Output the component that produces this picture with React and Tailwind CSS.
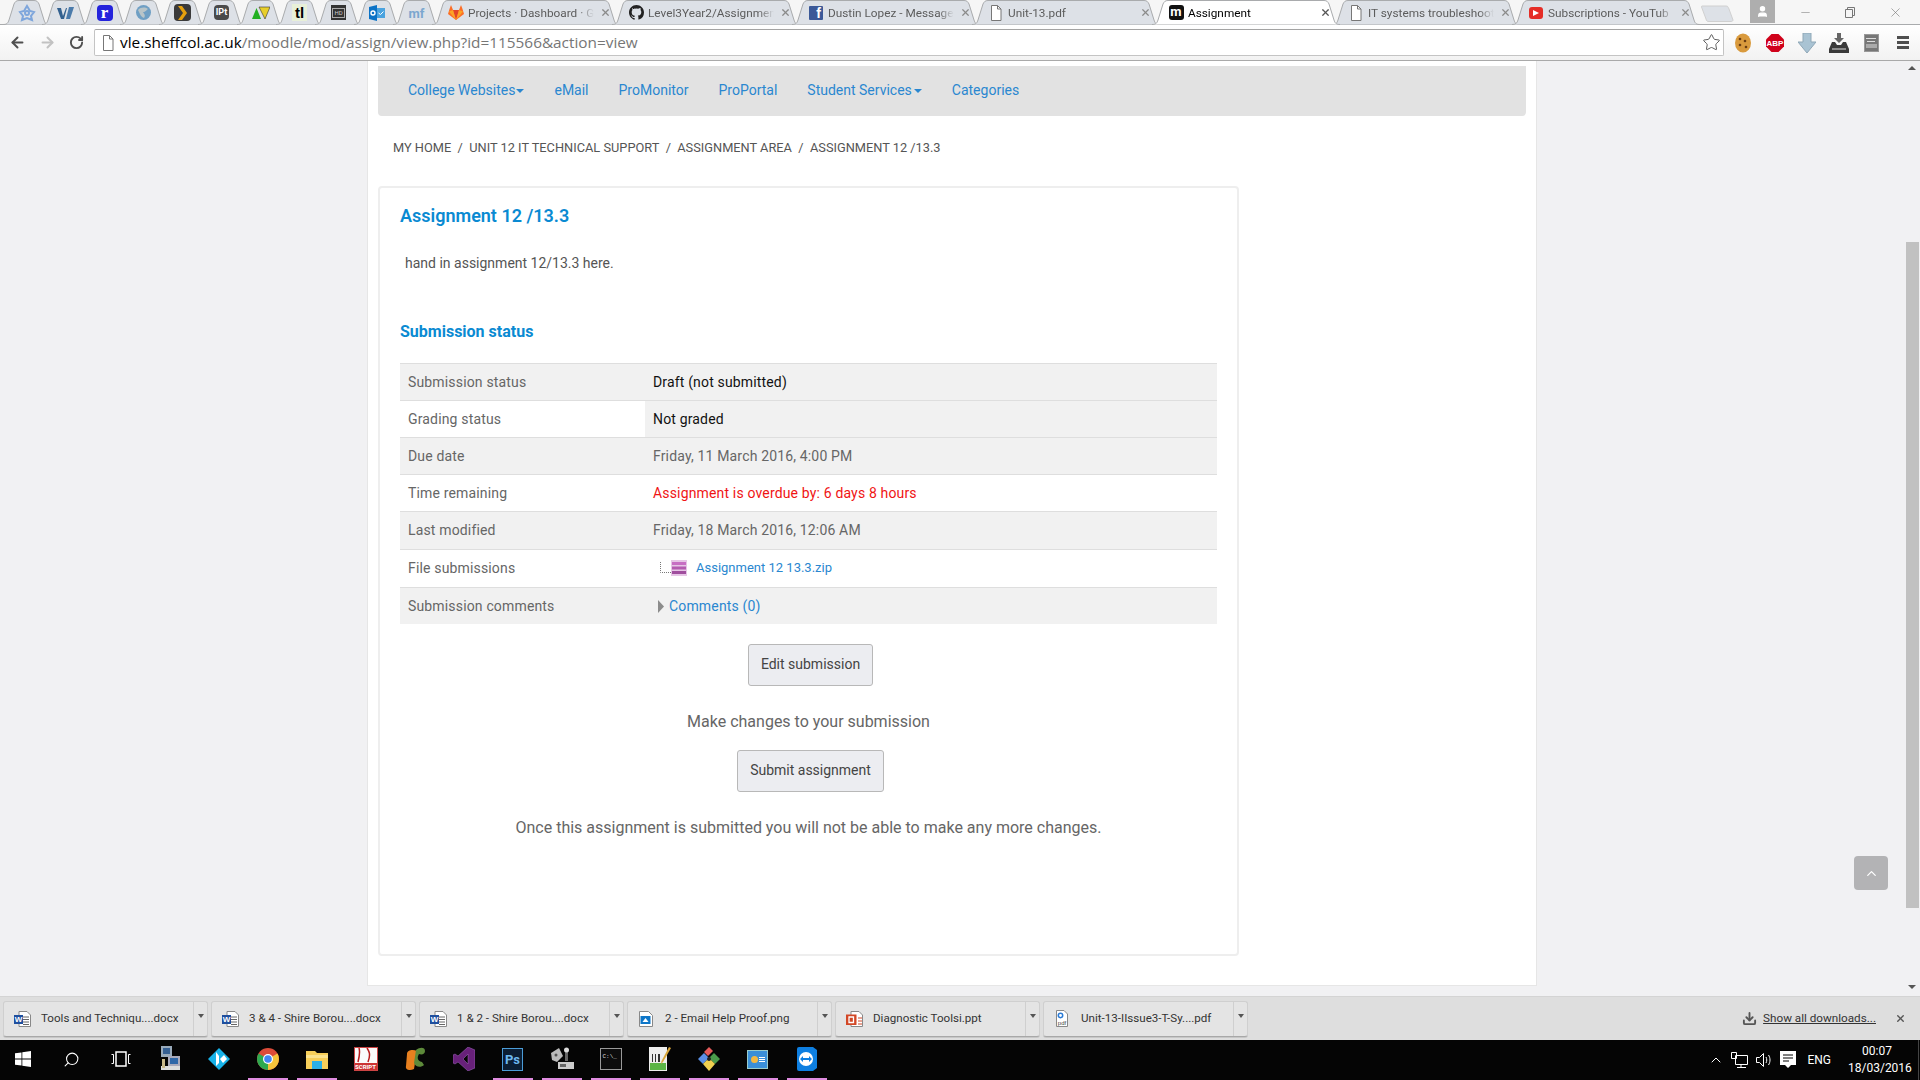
import { Star, ArrowLeft, ArrowRight, RotateCw, X, Minus, Download, Search, ChevronUp, User } from 'lucide-react';

const chromeFont = { fontFamily: 'Roboto, "Noto Sans", sans-serif' };

const PageIcon = () => (
  <svg width="14" height="16" viewBox="0 0 14 16" fill="#fff" stroke="#777">
    <path d="M2.5.5h6l3.500 3.500v11.500h-9.500z" />
    <path d="M8.500.5v3.500h3.500" fill="none" />
  </svg>
);

const pinned = [
  <svg key="a" width="18" height="18" viewBox="0 0 18 18" fill="none" stroke="#7ea6dc" strokeWidth="2"><path d="M9 2l3 5 4 1-3 4 1 4-5-2-5 2 1-4-3-4 4-1z" /><circle cx="9" cy="9" r="2" /></svg>,
  <svg key="b" width="18" height="14" viewBox="0 0 18 14" fill="#33618f"><path d="M0 2h4l2 8 3-8h1l-3 11H4z" /><path d="M12 1h5l-4 12H9z" fill="#4b7bab" /></svg>,
  <div key="c" className="w-4 h-4 bg-[#2323dc] rounded-sm flex items-center justify-center text-white font-bold text-[17px] leading-none font-['Liberation_Serif',serif]">r</div>,
  <svg key="d" width="17" height="17" viewBox="0 0 17 17"><circle cx="8.500" cy="8.500" r="7.500" fill="#6f9fc4" /><path d="M3 6c3-3 7-3 10-1-2 1-2 3-5 3 1 2 3 3 1 6-3-1-4-4-6-8z" fill="#b8c4c8" /></svg>,
  <div key="e" className="w-[17px] h-[17px] bg-[#3a3a3a] rounded-sm flex items-center justify-center"><svg width="9" height="14" viewBox="0 0 9 14" fill="#e5a00d"><path d="M0 0h4l5 7-5 7H0l5-7z" /></svg></div>,
  <div key="f" className="w-[15px] h-[15px] bg-[#4a4a4a] rounded-sm flex items-center justify-center text-white font-bold text-[9px] leading-none">IPt</div>,
  <svg key="g" width="18" height="14" viewBox="0 0 18 14"><path d="M4.500 2L9 13H0z" fill="#22b022" /><path d="M7 1h11l-5 12z" fill="#e8cf2a" stroke="#333" strokeWidth=".6" /></svg>,
  <div key="h" className="w-[15px] h-[17px] bg-[#e8f0d8] flex items-center justify-center text-black font-bold text-[15px] leading-none font-['Liberation_Sans',sans-serif]">tl</div>,
  <div key="i" className="w-[15px] h-[15px] bg-[#333] flex items-center justify-center"><span className="border border-[#aaa] text-[#ccc] text-[6px] leading-none px-[1px] py-[1px]">HD</span></div>,
  <svg key="j" width="17" height="16" viewBox="0 0 17 16"><path d="M7 3h9v10H7z" fill="#4aa3df" /><path d="M9.500 8l2 1.500 3-3" stroke="#fff" fill="none" /><path d="M0 2l8-2v16l-8-2z" fill="#0a72c6" /><circle cx="4" cy="8" r="2" fill="none" stroke="#fff" strokeWidth="1.400" /></svg>,
  <span key="k" className="text-[#7ba7cf] font-bold text-[13px] leading-none">mf</span>,
];

const TabShape = ({ fill, stroke, w }) => (
  <svg className="absolute left-0 top-0" width={w} height="25" viewBox={`0 0 ${w} 25`}>
    <path d={`M0 24.500C4 24.500 5 23 6 20L11 4C12 2 13 .5 16 .5H${w - 16}C${w - 13} .5 ${w - 12} 2 ${w - 11} 4L${w - 6} 20C${w - 5} 23 ${w - 4} 24.500 ${w} 24.500`} fill={fill} stroke={stroke} />
  </svg>
);

const PinnedTab = ({ children }) => (
  <div className="relative w-[47px] h-[25px] -mr-[8px] shrink-0 flex items-center justify-center">
    <TabShape w={47} fill="#dde1e7" stroke="#a9abad" />
    <div className="relative">{children}</div>
  </div>
);

const Tab = ({ icon, title, active }) => (
  <div className={`relative w-[188px] h-[25px] -mr-[8px] shrink-0 ${active ? 'z-10' : ''}`}>
    <TabShape w={188} fill={active ? '#ffffff' : '#dde1e7'} stroke="#a9abad" />
    <div className="relative flex items-center h-full pl-[16px]">
      <div className="w-4 h-4 shrink-0 flex items-center justify-center">{icon}</div>
      <span className={`ml-[4px] w-[126px] whitespace-nowrap text-[11.800px] leading-[24px] [mask-image:linear-gradient(to_right,black_88%,transparent)] ${active ? 'text-black' : 'text-[#5c5c5c]'}`}>{title}</span>
      <X size={11} strokeWidth={2.6} className={`ml-[6px] shrink-0 ${active ? 'text-[#555]' : 'text-[#8a8a8a]'}`} />
    </div>
  </div>
);

const TabBar = () => (
  <div className="h-[25px] bg-[#f6f6f6] relative flex items-start pl-[3px] shrink-0 border-b border-[#a9abad]" style={chromeFont}>
    {pinned.map((p, i) => <PinnedTab key={i}>{p}</PinnedTab>)}
    <Tab title="Projects · Dashboard · G" icon={
      <svg width="16" height="15" viewBox="0 0 16 15"><path d="M8 15L0 9l1.500-5L3 0l2 5h6l2-5 1.500 4L16 9z" fill="#fc6d26" /><path d="M8 15L5 5h6z" fill="#e24329" /><path d="M8 15L1 6.500 5 5zM8 15l7-8.500L11 5z" fill="#fca326" /></svg>
    } />
    <Tab title="Level3Year2/Assignmen" icon={
      <svg width="15" height="15" viewBox="0 0 16 16" fill="#222"><path d="M8 0C3.600 0 0 3.600 0 8c0 3.500 2.300 6.500 5.500 7.600.4.100.5-.2.500-.4v-1.400c-2.200.5-2.700-1-2.700-1-.4-.9-.9-1.200-.9-1.200-.7-.5.100-.5.100-.5.800.100 1.200.8 1.200.8.700 1.200 1.900.9 2.300.7.100-.5.300-.9.500-1.100-1.800-.2-3.600-.9-3.600-4 0-.9.300-1.600.8-2.100-.1-.2-.4-1 .1-2.100 0 0 .7-.2 2.200.8a7.500 7.500 0 014 0c1.500-1 2.200-.8 2.200-.8.400 1.100.2 1.900.1 2.100.5.600.8 1.300.8 2.100 0 3.100-1.900 3.700-3.700 3.900.3.300.6.800.6 1.500v2.200c0 .2.100.5.600.4A8 8 0 0016 8c0-4.400-3.600-8-8-8z" /></svg>
    } />
    <Tab title="Dustin Lopez - Message" icon={
      <div className="w-[14px] h-[14px] bg-[#3b5998] rounded-[1px] flex items-end justify-end overflow-hidden"><span className="text-white font-bold text-[14px] leading-[13px] pr-[2px] font-['Liberation_Sans',sans-serif]">f</span></div>
    } />
    <Tab title="Unit-13.pdf" icon={<PageIcon />} />
    <Tab active title="Assignment" icon={
      <div className="w-[15px] h-[15px] bg-[#111] rounded-[3px] flex items-center justify-center text-white font-bold text-[13px] leading-none pb-[2px]">m</div>
    } />
    <Tab title="IT systems troubleshoot" icon={<PageIcon />} />
    <Tab title="Subscriptions - YouTub" icon={
      <div className="w-[14px] h-[12px] bg-[#e52d27] rounded-[3px] flex items-center justify-center"><svg width="6" height="6" viewBox="0 0 6 6" fill="#fff"><path d="M0 0l6 3-6 3z" /></svg></div>
    } />
    <svg className="ml-[9px] mt-[5px] shrink-0" width="33" height="17" viewBox="0 0 33 17"><path d="M1 1H25C27 1 27 2 28 4L32 15C32 16 31 16.500 30 16.500H8C6 16.500 5.500 16 5 14L0.500 2C0.400 1.500 .5 1 1 1z" fill="#dde1e7" stroke="#d0d0d0" /></svg>
    <div className="ml-[16px] w-[25px] h-[23px] bg-[#aeaeae] flex items-center justify-center shrink-0">
      <User size={13} fill="#fff" stroke="#fff" />
    </div>
    <div className="ml-[20px] w-[20px] flex justify-center pt-[6px] text-[#777]"><Minus size={13} strokeWidth={1} /></div>
    <div className="ml-[25px] w-[20px] flex justify-center pt-[7px]">
      <svg width="10" height="11" viewBox="0 0 10 11" fill="none" stroke="#777"><path d="M.5 2.500h7v8h-7zM2.500 2.500v-2h7v8h-2" /></svg>
    </div>
    <div className="ml-[25px] w-[20px] flex justify-center pt-[5px] text-[#777]"><X size={15} strokeWidth={1} /></div>
  </div>
);

const ToolSlot = ({ children }) => <div className="w-[32px] flex justify-center items-center">{children}</div>;

const Toolbar = () => (
  <div className="h-[36px] bg-gradient-to-b from-white to-[#f2f2f2] border-b border-[#a9a9a9] shrink-0 flex items-center relative z-20">
    <ArrowLeft size={17} strokeWidth={2.8} className="ml-[9px] text-[#4f4f4f]" />
    <ArrowRight size={17} strokeWidth={2.8} className="ml-[13px] text-[#c2c2c2]" />
    <RotateCw size={15} strokeWidth={3} className="ml-[13px] text-[#4f4f4f]" />
    <div className="ml-[10px] h-[27px] w-[1630px] bg-white border border-[#c4c4c4] border-t-[#a3a3a3] rounded-[2px] flex items-center pl-[6px] relative">
      <PageIcon />
      <span className="ml-[5px] text-[15.350px] leading-none whitespace-nowrap text-[#767676] font-['Open_Sans',sans-serif]"><span className="text-black">vle.sheffcol.ac.uk</span>/moodle/mod/assign/view.php?id=115566&amp;action=view</span>
      <Star size={19} strokeWidth={1.2} className="absolute right-[2px] top-[3px] text-[#555]" />
    </div>
    <div className="flex items-center ml-[3px]">
      <ToolSlot><svg width="18" height="20" viewBox="0 0 18 20"><ellipse cx="9" cy="10" rx="8" ry="9.500" fill="#d99a3d" /><circle cx="6" cy="6" r="1.300" fill="#6b3d12" /><circle cx="11" cy="8" r="1.300" fill="#6b3d12" /><circle cx="6" cy="12" r="1.300" fill="#6b3d12" /><circle cx="12" cy="14" r="1.300" fill="#6b3d12" /></svg></ToolSlot>
      <ToolSlot><svg width="18" height="18" viewBox="0 0 18 18"><path d="M5.500 0h7L18 5.500v7L12.500 18h-7L0 12.500v-7z" fill="#d0021b" /><text x="9" y="12" textAnchor="middle" fill="#fff" fontSize="8" fontWeight="700" fontFamily="Liberation Sans">ABP</text></svg></ToolSlot>
      <ToolSlot><svg width="18" height="20" viewBox="0 0 18 20"><path d="M5 0h8v9h5l-9 11L0 9h5z" fill="#a9c3d3" stroke="#8fa8b7" /></svg></ToolSlot>
      <ToolSlot><svg width="20" height="20" viewBox="0 0 20 20"><path d="M8 0h4v5h3l-5 5-5-5h3z" fill="#666" /><path d="M3 9h3l2 3h4l2-3h3l3 7v4H0v-4z" fill="#3a3a3a" /><path d="M3 16h14" stroke="#ddd" /></svg></ToolSlot>
      <ToolSlot><div className="w-[15px] h-[18px] bg-[#777] border border-[#999] flex flex-col items-center justify-start pt-[3px] gap-[2px]">
        <div className="w-[10px] h-[1px] bg-[#ddd]" /><div className="w-[8px] h-[1px] bg-[#ddd]" /><div className="w-[11px] h-[4px] bg-[#aaa]" />
      </div></ToolSlot>
      <ToolSlot><div className="flex flex-col gap-[2px]">
        <div className="w-[12px] h-[3px] bg-[#4f4f4f]" /><div className="w-[12px] h-[3px] bg-[#4f4f4f]" /><div className="w-[12px] h-[3px] bg-[#4f4f4f]" />
      </div></ToolSlot>
    </div>
  </div>
);

const Row = ({ label, className, labelBg = '', valueBg = '', children }) => (
  <div className={`flex border-t border-[#dedede] text-[14px] tracking-[0.16px] text-[#666] ${className}`}>
    <div className={`w-[245px] pl-[8px] flex items-center ${labelBg}`}>{label}</div>
    <div className={`flex-1 pl-[8px] flex items-center ${valueBg}`}>{children}</div>
  </div>
);

const StatusTable = () => (
  <div className="mt-[21px]">
    <Row label="Submission status" className="h-[37px] bg-[#f1f1f1]"><span className="text-[#111]">Draft (not submitted)</span></Row>
    <Row label="Grading status" className="h-[37px]" valueBg="bg-[#f1f1f1]"><span className="text-[#111]">Not graded</span></Row>
    <Row label="Due date" className="h-[37px] bg-[#f1f1f1]">Friday, 11 March 2016, 4:00 PM</Row>
    <Row label="Time remaining" className="h-[37px]"><span className="text-[#f01414]">Assignment is overdue by: 6 days 8 hours</span></Row>
    <Row label="Last modified" className="h-[38px] bg-[#f1f1f1]">Friday, 18 March 2016, 12:06 AM</Row>
    <Row label="File submissions" className="h-[38px] pb-[1px]">
      <svg className="ml-[7px]" width="12" height="12" viewBox="0 0 12 12" fill="none" stroke="#777" strokeDasharray="1 1"><path d="M.5 0v10.500H12" /></svg>
      <svg className="-ml-[1px]" width="16" height="16" viewBox="0 0 16 16"><path d="M0 0h16v16H0z" fill="#e6c6e6" /><path d="M1 2h14v3H1z" fill="#c76fc3" /><path d="M1 6.500h14v3H1z" fill="#b45cb0" /><path d="M1 11h14v3H1z" fill="#a04e9e" /></svg>
      <span className="ml-[9px] text-[13px] tracking-normal text-[#2a87d0]">Assignment 12 13.3.zip</span>
    </Row>
    <Row label="Submission comments" className="h-[37px] bg-[#f1f1f1]">
      <svg className="ml-[5px]" width="6" height="13" viewBox="0 0 6 13" fill="#8c8c8c"><path d="M0 0l6 6.500-6 6.500z" /></svg>
      <span className="ml-[5px] text-[#2a87d0]">Comments (0)</span>
    </Row>
  </div>
);

const Button = ({ children, className }) => (
  <div className={`flex items-center justify-center pb-[1px] bg-[#ecedf1] border border-[#b8b8b8] rounded-[3px] text-[14px] text-[#444] ${className}`}>{children}</div>
);

const Caret = ({ className }) => (
  <span className={`w-0 h-0 border-x-[4px] border-x-transparent border-t-[4px] border-t-[#2a87d0] ${className}`} />
);

const Page = () => (
  <div className="ml-[367px] w-[1170px] h-[925px] bg-white border-x border-b border-[#e6e6e6] pl-[10px] pt-[5px]">
    <div className="w-[1148px] h-[50px] pb-[1px] bg-[#e2e2e2] rounded-b-[4px] flex items-center pl-[30px] gap-[30px] text-[14px] text-[#2a87d0]">
      <span className="flex items-center">College Websites<Caret className="ml-[1px]" /></span>
      <span>eMail</span>
      <span>ProMonitor</span>
      <span>ProPortal</span>
      <span className="flex items-center">Student Services<Caret className="ml-[2px]" /></span>
      <span>Categories</span>
    </div>
    <div className="mt-[22px] h-[20px] flex items-center pl-[15px] text-[12.800px] text-[#555] uppercase whitespace-pre">
      <span>My Home</span><span>  /  </span><span>Unit 12 IT Technical Support</span><span>  /  </span><span>Assignment Area</span><span>  /  </span><span>Assignment 12 /13.3</span>
    </div>
    <div className="mt-[28px] w-[861px] h-[770px] border-2 border-[#eeeeee] rounded-[4px] px-[20px]">
      <h2 className="mt-[16px] h-[24px] leading-[24px] text-[18px] font-semibold text-[#0a8ad2]">Assignment 12 /13.3</h2>
      <p className="mt-[25px] h-[20px] leading-[20px] pl-[5px] text-[14px] text-[#555]">hand in assignment 12/13.3 here.</p>
      <h3 className="mt-[49px] h-[20px] leading-[20px] text-[16px] font-bold text-[#0a8ad2]">Submission status</h3>
      <StatusTable />
      <Button className="mt-[20px] ml-[348px] w-[125px] h-[42px]">Edit submission</Button>
      <p className="mt-[24px] h-[24px] leading-[24px] text-center text-[16px] text-[#666]">Make changes to your submission</p>
      <Button className="mt-[16px] ml-[337px] w-[147px] h-[42px]">Submit assignment</Button>
      <p className="mt-[24px] h-[24px] leading-[24px] text-center text-[16px] text-[#666]">Once this assignment is submitted you will not be able to make any more changes.</p>
    </div>
  </div>
);

const Scrollbar = () => (
  <div className="w-[15px] h-[935px] shrink-0 flex flex-col items-center pr-[1px]">
    <div className="mt-[5px] w-0 h-0 border-x-[4px] border-x-transparent border-b-[4px] border-b-[#555]" />
    <div className="mt-[172px] w-[13px] h-[666px] bg-[#c1c1c1]" />
    <div className="mt-[77px] w-0 h-0 border-x-[4px] border-x-transparent border-t-[4px] border-t-[#555]" />
  </div>
);

const WordIcon = () => (
  <svg width="17" height="16" viewBox="0 0 17 16"><path d="M5 .5h8l3.500 3.500v11.500H5z" fill="#fff" stroke="#888" /><path d="M9 6h6M9 8.500h6M9 11h6M9 13.500h6" stroke="#666" /><path d="M0 4h9v9H0z" fill="#1f4f9e" /><text x="4.500" y="11" textAnchor="middle" fill="#fff" fontSize="8" fontWeight="700" fontFamily="Liberation Sans">W</text></svg>
);

const downloads = [
  { name: 'Tools and Techniqu....docx', icon: <WordIcon /> },
  { name: '3 & 4 - Shire Borou....docx', icon: <WordIcon /> },
  { name: '1 & 2 - Shire Borou....docx', icon: <WordIcon /> },
  { name: '2 - Email Help Proof.png', icon: <svg width="14" height="16" viewBox="0 0 14 16"><path d="M.5.5h9l4 4v11H.5z" fill="#fff" stroke="#888" /><path d="M1.500 5h10v8h-10z" fill="#0d76c8" /><path d="M3.500 11l3-4 3 4z" fill="#fff" /></svg> },
  { name: 'Diagnostic Toolsi.ppt', icon: <svg width="17" height="16" viewBox="0 0 17 16"><path d="M5 .5h8l3.500 3.500v11.500H5z" fill="#fff" stroke="#888" /><path d="M12 7h4M12 10h4M12 13h4" stroke="#d24726" /><path d="M0 3.500h10.500V14H0z" fill="#d24726" /><path d="M3 6h4.500v5.500H3z" fill="none" stroke="#fff" strokeWidth="1.300" /></svg> },
  { name: 'Unit-13-IIssue3-T-Sy....pdf', icon: <svg width="12" height="17" viewBox="0 0 12 17"><path d="M.5.500h7.500l3.500 3.500v12.500H.5z" fill="#fff" stroke="#888" /><circle cx="4.500" cy="5.500" r="2.200" fill="none" stroke="#2a7bd6" strokeWidth="1.500" /><text x="6" y="14.500" textAnchor="middle" fill="#444" fontSize="6" fontFamily="Liberation Sans">pdf</text></svg> },
];

const DownloadBar = () => (
  <div className="h-[44px] bg-[#dedede] border-t border-[#d4d4d4] shrink-0 flex items-center pl-[3px] gap-[3px] relative" style={chromeFont}>
    {downloads.map((d) => (
      <div key={d.name} className="w-[205px] h-[36px] flex bg-[#e4e4e4] border border-[#cfcfcf] border-b-[#a8a8a8] rounded-[3px] shadow-[0_1px_0_rgba(0,0,0,0.1)]">
        <div className="flex-1 flex items-center">
          <div className="w-[24px] ml-[6px] flex justify-center shrink-0">{d.icon}</div>
          <span className="ml-[7px] text-[11.600px] text-[#333] whitespace-nowrap">{d.name}</span>
        </div>
        <div className="w-[14px] border-l border-[#cfcfcf] flex justify-center pt-[12px]">
          <div className="w-0 h-0 border-x-[3px] border-x-transparent border-t-[4px] border-t-[#555]" />
        </div>
      </div>
    ))}
    <div className="ml-auto flex items-center pr-[14px]">
      <Download size={15} strokeWidth={3} className="text-[#555]" />
      <span className="ml-[6px] text-[11.700px] text-[#333] underline">Show all downloads...</span>
      <X size={11} strokeWidth={3} className="ml-[19px] text-[#555]" />
    </div>
  </div>
);

const taskIcons = [
  { icon: <svg width="16" height="16" viewBox="0 0 16 16" fill="#fff"><path d="M0 2.300l6.500-.9v6.200H0zM7.300 1.300L16 0v7.600H7.300zM0 8.400h6.500v6.200L0 13.700zM7.300 8.400H16V16l-8.700-1.300z" /></svg> },
  { icon: <Search size={17} strokeWidth={1.500} className="text-white -scale-x-100" /> },
  { icon: <svg width="20" height="16" viewBox="0 0 20 16" fill="none" stroke="#fff"><path d="M5 1h10v14H5z" strokeWidth="1.500" /><path d="M.5 3.500H2.500v9H.5M19.500 3.500H17.500v9h2" /></svg> },
  { icon: <svg width="20" height="26" viewBox="0 0 20 26"><path d="M1 0h11v11H1z" fill="#9ab" /><path d="M3 2h7v6H3z" fill="#355f92" /><path d="M8 10h12v10H8z" fill="#aab" /><path d="M10 12h8v6h-8z" fill="#2f67a8" /><path d="M1 20h19v4H1z" fill="#ddd" /><path d="M2 13h3v9H2z" fill="#c9b98a" /></svg> },
  { icon: <svg width="22" height="22" viewBox="0 0 22 22"><path d="M11 0L22 11 11 22 0 11z" fill="#17b2e8" /><path d="M8 4v14l3-3V8zM12 11l4-4 3 4-4 4z" fill="#fff" /></svg> },
  { icon: <svg width="22" height="22" viewBox="0 0 22 22"><circle cx="11" cy="11" r="11" fill="#dd4b39" /><path d="M11 11L20.500 5.500A11 11 0 0111 22z" fill="#f5c33b" /><path d="M11 11v11A11 11 0 011.500 5.500z" fill="#2da94f" /><circle cx="11" cy="11" r="5" fill="#fff" /><circle cx="11" cy="11" r="3.800" fill="#4285f4" /></svg>, on: true },
  { icon: <svg width="22" height="20" viewBox="0 0 22 20"><path d="M0 2h9l2 2h11v16H0z" fill="#f7cf5a" /><path d="M0 6h22v3H0z" fill="#fbe38e" /><path d="M6 12h10v8H6z" fill="#2bb0e8" /></svg>, on: true },
  { icon: <div className="w-[24px] h-[24px] bg-[#fafafa] border border-[#c44] flex flex-col items-center justify-end"><svg width="20" height="15" viewBox="0 0 20 15" fill="none" stroke="#b71c1c" strokeWidth="1.500"><path d="M2 14C4 6 4 3 3 0M12 14C15 6 13 3 11 0" /></svg><span className="w-full bg-[#c33] text-white text-[6px] leading-[7px] text-center font-bold">SCRIPT</span></div> },
  { icon: <svg width="22" height="24" viewBox="0 0 22 24"><path d="M3 7c0-4 6-5 10-3L10 22c-4 2-9 1-8-3z" fill="#e8801f" /><path d="M12 3c4-3 9-3 9 1 0 3-3 4-6 3-2 3-2 7 3 8l2 3c-3 3-9 2-10-2z" fill="#5d8a3a" /></svg> },
  { icon: <svg width="22" height="24" viewBox="0 0 22 24"><path d="M15 0l7 3v18l-7 3L5 15l-3 2-2-1V8l2-1 3 2zM15 7l-5 5 5 5z" fill="#68217a" stroke="#a56cc4" strokeWidth=".5" /></svg> },
  { icon: <div className="w-[21px] h-[23px] bg-[#0b1e33] border border-[#4b9cd8] flex items-center justify-center text-[#6db8ef] text-[13px] font-bold leading-none">Ps</div>, on: true },
  { icon: <svg width="24" height="24" viewBox="0 0 24 24"><path d="M1 6l8-5 4 8-6 6-5-2z" fill="#bbb" /><circle cx="6" cy="8" r="1.500" fill="#555" /><path d="M15 2h3v12h-3z" fill="#666" /><circle cx="16.500" cy="3" r="2.500" fill="#ddd" /><path d="M8 15h16v7H8z" fill="#ccc" /><path d="M10 17h6v3h-6z" fill="#666" /></svg>, on: true },
  { icon: <div className="w-[22px] h-[22px] bg-[#0c0c0c] border border-[#999] pt-[5px] pl-[2px]"><span className="block text-[#ddd] text-[6px] leading-none whitespace-pre font-['Liberation_Mono',monospace]">C:\_</span></div>, on: true },
  { icon: <svg width="22" height="24" viewBox="0 0 22 24"><path d="M0 0h18v24H0z" fill="#eee" /><path d="M1 16h16v7H1z" fill="#5bb546" /><path d="M3 7h1v8H3zM6 7h1v8H6zM9 7h2v8H9z" fill="#333" /><path d="M20 0l2 1-8 14-2 2 .5-3z" fill="#d9a63a" /></svg>, on: true },
  { icon: <svg width="24" height="24" viewBox="0 0 24 24"><path d="M7 5l5-5 4 4-5 5z" fill="#e55a5a" /><path d="M1 12l6-6 5 5-6 6z" fill="#5a8fe5" /><path d="M12 11l5-5 6 6-5 5z" fill="#4b9b4b" /><path d="M6 17l6-6 6 6-6 7z" fill="#f0d050" /><circle cx="12" cy="12" r="2" fill="#222" /></svg>, on: true },
  { icon: <div className="w-[21px] h-[19px] bg-[#3a8fd8] border border-[#9cc] flex items-center justify-center gap-[1px]"><div className="w-[7px] h-[7px] bg-[#f4b942] rounded-full" /><div className="flex flex-col gap-[1px]"><div className="w-[6px] h-[1px] bg-white" /><div className="w-[6px] h-[1px] bg-white" /><div className="w-[6px] h-[1px] bg-white" /></div></div>, on: true },
  { icon: <svg width="20" height="24" viewBox="0 0 20 24"><path d="M2 0h14l4 3v18l-4 3H2a2 2 0 01-2-2V2a2 2 0 012-2z" fill="#0e7fe1" /><circle cx="9" cy="12" r="7" fill="#fff" /><path d="M3 12l3-3v2h6V9l3 3-3 3v-2H6v2z" fill="#0e7fe1" /></svg>, on: true },
];

const Taskbar = () => (
  <div className="h-[40px] bg-[#050505] shrink-0 flex items-stretch" style={chromeFont}>
    {taskIcons.map((t, i) => (
      <div key={i} className={`relative w-[49px] shrink-0 flex items-center justify-center pb-[2px] ${i === 0 ? '-ml-[2px]' : ''}`}>
        {t.icon}
        {t.on && <div className="absolute bottom-0 left-[5px] w-[40px] h-[2px] bg-[#e08ce0]" />}
      </div>
    ))}
    <div className="ml-auto flex items-center text-white">
      <ChevronUp size={16} strokeWidth={1.500} />
      <svg className="ml-[7px]" width="17" height="16" viewBox="0 0 17 16" fill="none" stroke="#fff"><path d="M4.500 3.500h12v9h-12zM.5.500h5v6h-5zM10 12.500v3M6 15.500h9" /></svg>
      <svg className="ml-[8px]" width="15" height="14" viewBox="0 0 15 14" fill="none" stroke="#fff"><path d="M.5 4.500h3l4-4v13l-4-4h-3zM10 4c1 2 1 4 0 6M12.500 2c2 3 2 7 0 10" /></svg>
      <svg className="ml-[9px]" width="16" height="18" viewBox="0 0 16 18" fill="#fff"><path d="M0 0h16v14h-5l-3 3-3-3H0z" /><path d="M3 4h10M3 7h10M3 10h6" stroke="#000" /></svg>
      <span className="ml-[11px] text-[12px]">ENG</span>
      <div className="ml-[17px] w-[58px] text-center text-[12px] leading-[17px] whitespace-nowrap pb-[1px]">00:07<br />18/03/2016</div>
      <div className="ml-[12px] w-[2px] h-full border-l border-[#444]" />
    </div>
  </div>
);

export default function App() {
  return (
    <div className="w-[1920px] h-[1080px] overflow-hidden flex flex-col font-['Roboto',sans-serif]">
      <TabBar />
      <Toolbar />
      <div className="h-[935px] bg-[#f1f1f3] flex relative shrink-0">
        <div className="flex-1"><Page /></div>
        <Scrollbar />
        <div className="absolute left-[1854px] top-[795px] w-[34px] h-[34px] bg-[#b3b3b5] rounded-[4px] flex items-center justify-center">
          <ChevronUp size={15} strokeWidth={2} className="text-white" />
        </div>
      </div>
      <DownloadBar />
      <Taskbar />
    </div>
  );
}
